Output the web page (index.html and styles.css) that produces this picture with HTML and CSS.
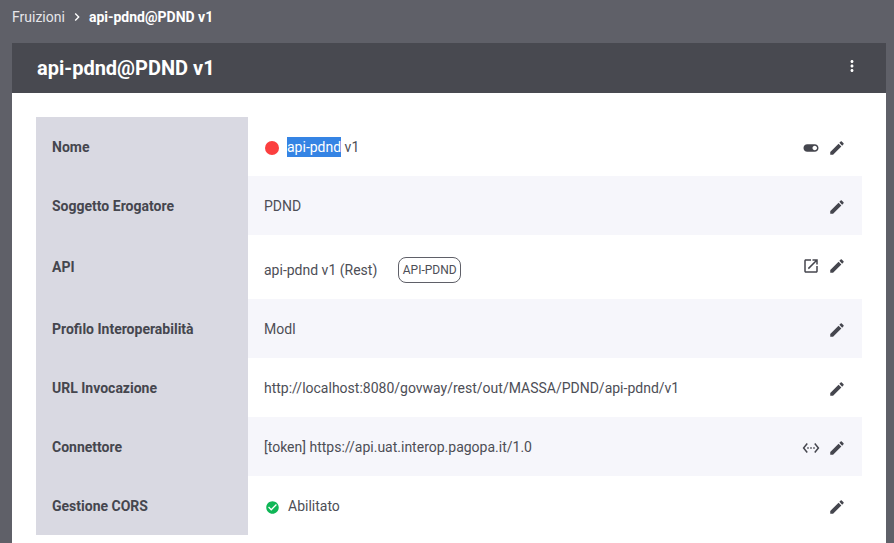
FILE: index.html
```html
<!DOCTYPE html>
<html lang="it">
<head>
<meta charset="utf-8">
<title>api-pdnd@PDND v1</title>
<link rel="stylesheet" href="styles.css">
</head>
<body>
<nav class="crumbs">
  <span class="crumb">Fruizioni</span>
  <svg class="crumb-sep" viewBox="0 0 24 24"><path d="M8.59 16.59L13.17 12 8.59 7.41 10 6l6 6-6 6z"/></svg>
  <strong class="crumb-current">api-pdnd@PDND v1</strong>
</nav>
<main class="card">
  <header class="card-head">
    <h1 class="card-title">api-pdnd@PDND v1</h1>
    <svg class="more" viewBox="0 0 24 24"><path d="M12 8c1.1 0 2-.9 2-2s-.9-2-2-2-2 .9-2 2 .9 2 2 2zm0 2c-1.1 0-2 .9-2 2s.9 2 2 2 2-.9 2-2-.9-2-2-2zm0 6c-1.1 0-2 .9-2 2s.9 2 2 2 2-.9 2-2-.9-2-2-2z"/></svg>
  </header>
  <div class="card-body">
    <div class="rows">
      <div class="row">
        <div class="label">Nome</div>
        <div class="value">
          <span class="dot"></span>
          <span class="name"><span class="selected">api-pdnd</span> v1</span>
          <div class="actions">
            <svg class="icon" viewBox="0 0 24 24"><path d="M17 7H7c-2.76 0-5 2.24-5 5s2.24 5 5 5h10c2.76 0 5-2.24 5-5s-2.24-5-5-5zm0 8c-1.66 0-3-1.34-3-3s1.34-3 3-3 3 1.34 3 3-1.34 3-3 3z"/></svg>
            <svg class="icon" viewBox="0 0 24 24"><path d="M3 17.25V21h3.75L17.81 9.94l-3.75-3.75L3 17.25zM20.71 7.04c.39-.39.39-1.02 0-1.41l-2.34-2.34c-.39-.39-1.02-.39-1.41 0l-1.83 1.83 3.75 3.75 1.83-1.83z"/></svg>
          </div>
        </div>
      </div>
      <div class="row alt">
        <div class="label">Soggetto Erogatore</div>
        <div class="value">
          <span>PDND</span>
          <div class="actions">
            <svg class="icon" viewBox="0 0 24 24"><path d="M3 17.25V21h3.75L17.81 9.94l-3.75-3.75L3 17.25zM20.71 7.04c.39-.39.39-1.02 0-1.41l-2.34-2.34c-.39-.39-1.02-.39-1.41 0l-1.83 1.83 3.75 3.75 1.83-1.83z"/></svg>
          </div>
        </div>
      </div>
      <div class="row tall">
        <div class="label">API</div>
        <div class="value">
          <span>api-pdnd v1 (Rest)</span>
          <span class="tag">API-PDND</span>
          <div class="actions">
            <svg class="icon" viewBox="0 0 24 24"><path d="M19 19H5V5h7V3H5c-1.11 0-2 .9-2 2v14c0 1.1.89 2 2 2h14c1.1 0 2-.9 2-2v-7h-2v7zM14 3v2h3.59l-9.83 9.83 1.41 1.41L19 6.41V10h2V3h-7z"/></svg>
            <svg class="icon" viewBox="0 0 24 24"><path d="M3 17.25V21h3.75L17.81 9.94l-3.75-3.75L3 17.25zM20.71 7.04c.39-.39.39-1.02 0-1.41l-2.34-2.34c-.39-.39-1.02-.39-1.41 0l-1.83 1.83 3.75 3.75 1.83-1.83z"/></svg>
          </div>
        </div>
      </div>
      <div class="row alt">
        <div class="label">Profilo Interoperabilità</div>
        <div class="value">
          <span>ModI</span>
          <div class="actions">
            <svg class="icon" viewBox="0 0 24 24"><path d="M3 17.25V21h3.75L17.81 9.94l-3.75-3.75L3 17.25zM20.71 7.04c.39-.39.39-1.02 0-1.41l-2.34-2.34c-.39-.39-1.02-.39-1.41 0l-1.83 1.83 3.75 3.75 1.83-1.83z"/></svg>
          </div>
        </div>
      </div>
      <div class="row">
        <div class="label">URL Invocazione</div>
        <div class="value">
          <span>http://localhost:8080/govway/rest/out/MASSA/PDND/api-pdnd/v1</span>
          <div class="actions">
            <svg class="icon" viewBox="0 0 24 24"><path d="M3 17.25V21h3.75L17.81 9.94l-3.75-3.75L3 17.25zM20.71 7.04c.39-.39.39-1.02 0-1.41l-2.34-2.34c-.39-.39-1.02-.39-1.41 0l-1.83 1.83 3.75 3.75 1.83-1.83z"/></svg>
          </div>
        </div>
      </div>
      <div class="row alt">
        <div class="label">Connettore</div>
        <div class="value">
          <span>[token] https://api.uat.interop.pagopa.it/1.0</span>
          <div class="actions">
            <svg class="icon" viewBox="0 0 24 24"><path d="M7.77 6.76L6.23 5.48.82 12l5.41 6.52 1.54-1.28L3.42 12l4.35-5.24zM7 13h2v-2H7v2zm10-2h-2v2h2v-2zm-6 2h2v-2h-2v2zm6.77-7.52l-1.54 1.28L20.58 12l-4.35 5.24 1.54 1.28L23.18 12l-5.41-6.52z"/></svg>
            <svg class="icon" viewBox="0 0 24 24"><path d="M3 17.25V21h3.75L17.81 9.94l-3.75-3.75L3 17.25zM20.71 7.04c.39-.39.39-1.02 0-1.41l-2.34-2.34c-.39-.39-1.02-.39-1.41 0l-1.83 1.83 3.75 3.75 1.83-1.83z"/></svg>
          </div>
        </div>
      </div>
      <div class="row">
        <div class="label">Gestione CORS</div>
        <div class="value">
          <svg class="check" viewBox="0 0 24 24"><path d="M12 2C6.48 2 2 6.48 2 12s4.48 10 10 10 10-4.48 10-10S17.52 2 12 2zm-2 15l-5-5 1.41-1.41L10 14.17l7.59-7.59L19 8l-9 9z"/></svg>
          <span class="name">Abilitato</span>
          <div class="actions">
            <svg class="icon" viewBox="0 0 24 24"><path d="M3 17.25V21h3.75L17.81 9.94l-3.75-3.75L3 17.25zM20.71 7.04c.39-.39.39-1.02 0-1.41l-2.34-2.34c-.39-.39-1.02-.39-1.41 0l-1.83 1.83 3.75 3.75 1.83-1.83z"/></svg>
          </div>
        </div>
      </div>
    </div>
  </div>
</main>
</body>
</html>
```

FILE: styles.css
```css
* { box-sizing: border-box; }
html, body { margin: 0; height: 543px; overflow: hidden; }
body {
  background: #5f6068;
  font-family: Roboto, "Liberation Sans", sans-serif;
  font-size: 14px;
  color: #45464e;
  display: flex;
  flex-direction: column;
  padding: 0 8px 0 12px;
}
.crumbs {
  height: 43px;
  flex: none;
  display: flex;
  align-items: center;
  padding-bottom: 9px;
  color: #fff;
  font-size: 14px;
}
.crumb { color: #e6e6ea; }
.crumb-sep { width: 16px; height: 16px; fill: #fff; margin: 0 4px; }
.crumb-current { font-weight: 700; }
.card { flex: 1; background: #fff; display: flex; flex-direction: column; min-height: 0; }
.card-head {
  height: 50px;
  flex: none;
  background: #484950;
  color: #fff;
  display: flex;
  align-items: center;
  justify-content: space-between;
  padding: 0 25px;
}
.card-title { margin: 0; font-size: 20px; font-weight: 700; line-height: 24px; }
.more { width: 18px; height: 18px; fill: #fff; margin-top: -4px; }
.card-body { padding: 24px 24px 0; }
.rows { display: flex; flex-direction: column; }
.row { display: flex; height: 59px; }
.row.tall { height: 64px; }
.row.tall .value { padding-top: 6px; }
.row.alt .value { background: #f6f6fb; }
.label {
  width: 212px;
  flex: none;
  background: #d9d9e2;
  padding: 0 16px;
  display: flex;
  align-items: center;
  font-weight: 700;
}
.value {
  flex: 1;
  display: flex;
  align-items: center;
  padding: 0 16px;
  min-width: 0;
  color: #4d4e56;
}
.dot { width: 14px; height: 14px; border-radius: 50%; background: #fb3f3f; margin: 2px 0 0 1px; }
.name { margin-left: 8px; }
.selected { background: #3584e4; color: #fff; display: inline-block; line-height: 20px; }
.tag {
  margin-left: 21px;
  height: 26px;
  padding: 0 3.5px;
  border: 1px solid #5f6068;
  border-radius: 8px;
  display: flex;
  align-items: center;
  font-size: 12px;
}
.actions { margin-left: auto; margin-top: 3px; display: flex; gap: 8px; align-items: center; }
.row.tall .actions { margin-top: 0; margin-bottom: 8px; }
.icon { width: 18px; height: 18px; fill: #45464e; display: block; }
.check { width: 15px; height: 15px; fill: #0fb656; margin: 3px 0 0 .5px; }
.check + .name { margin-left: 8.5px; }
```
